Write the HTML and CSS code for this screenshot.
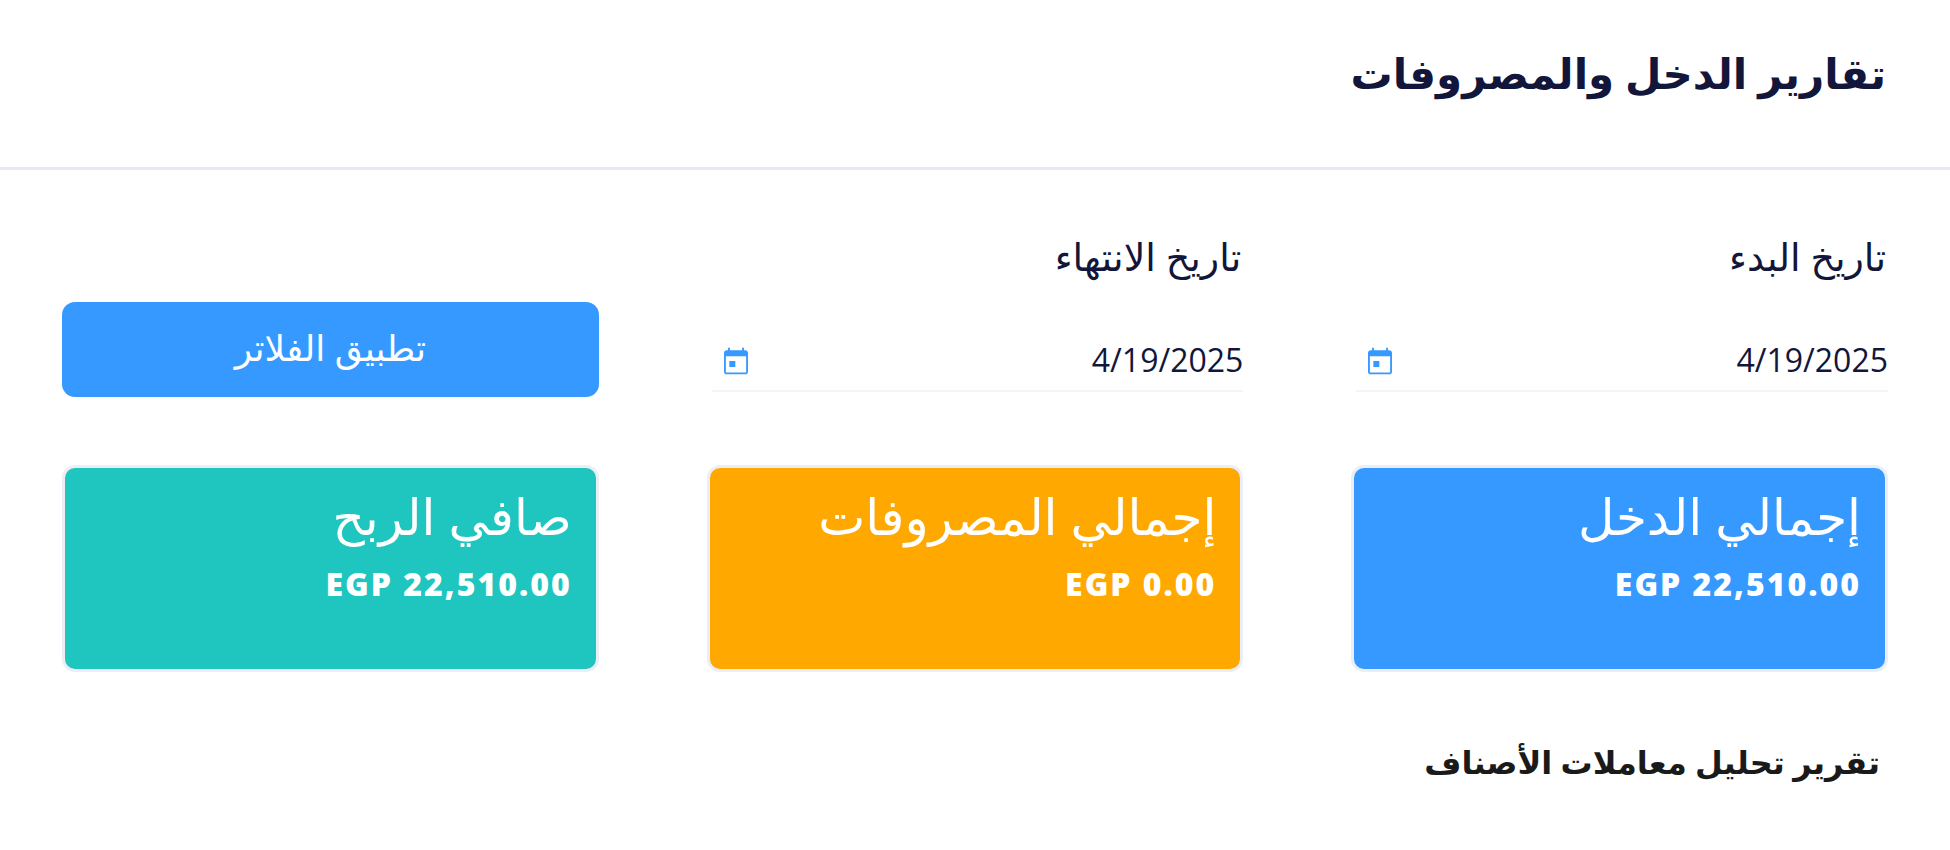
FILE: index.html
```html
<!DOCTYPE html>
<html lang="ar" dir="rtl">
<head>
  <meta charset="UTF-8">
  <meta name="viewport" content="width=device-width, initial-scale=1.0">
  <title>تقارير الدخل والمصروفات</title>
  <link rel="stylesheet" href="styles.css">
</head>
<body>
  <header class="page-header">
    <h1>تقارير الدخل والمصروفات</h1>
  </header>

  <main class="content">
    <form class="row filters">
      <div class="field">
        <label for="startDate">تاريخ البدء</label>
        <div class="date-box">
          <input type="text" id="startDate" value="4/19/2025">
          <button type="button" class="picker" aria-label="اختر تاريخ البدء">
            <svg viewBox="0 0 24 24"><path d="M19 4h-1V2h-1.400v2H7.400V2H6v2H5c-1.100 0-2 .9-2 2v14c0 1.100.9 2 2 2h14c1.100 0 2-.9 2-2V6c0-1.100-.9-2-2-2zm.6 16.600H4.400V8.500h15.200v12.100zM7 12h4.500v4.500H7z"/></svg>
          </button>
        </div>
      </div>
      <div class="field">
        <label for="endDate">تاريخ الانتهاء</label>
        <div class="date-box">
          <input type="text" id="endDate" value="4/19/2025">
          <button type="button" class="picker" aria-label="اختر تاريخ الانتهاء">
            <svg viewBox="0 0 24 24"><path d="M19 4h-1V2h-1.400v2H7.400V2H6v2H5c-1.100 0-2 .9-2 2v14c0 1.100.9 2 2 2h14c1.100 0 2-.9 2-2V6c0-1.100-.9-2-2-2zm.6 16.600H4.400V8.500h15.200v12.100zM7 12h4.500v4.500H7z"/></svg>
          </button>
        </div>
      </div>
      <button type="button" class="apply">تطبيق الفلاتر</button>
    </form>

    <section class="row cards">
      <div class="card income">
        <h2>إجمالي الدخل</h2>
        <p>EGP 22,510.00</p>
      </div>
      <div class="card expenses">
        <h2>إجمالي المصروفات</h2>
        <p>EGP 0.00</p>
      </div>
      <div class="card profit">
        <h2>صافي الربح</h2>
        <p>EGP 22,510.00</p>
      </div>
    </section>

    <h2 class="report-title">تقرير تحليل معاملات الأصناف</h2>
  </main>
</body>
</html>
```
FILE: styles.css
```css
* {
  box-sizing: border-box;
}

body {
  margin: 0;
  background: #fff;
  color: #12163a;
  font-family: "Open Sans", "DejaVu Sans", sans-serif;
  font-size: 32px;
}

h1, h2, p {
  margin: 0;
}

.page-header {
  padding: 43px 64px 64px;
  border-bottom: 3px solid #e6e8f4;
}

.page-header h1 {
  font-size: 42px;
  line-height: 60px;
  font-weight: 700;
}

.content {
  padding: 62px;
}

.row {
  display: grid;
  grid-template-columns: repeat(3, 1fr);
  gap: 108px;
}

.filters {
  align-items: end;
}

.field {
  display: flex;
  flex-direction: column;
  gap: 52px;
  padding-left: 5px;
  padding-bottom: 5px;
}

.field label {
  padding-right: 2px;
  font-size: 38px;
  line-height: 48px;
}

.date-box {
  display: flex;
  align-items: center;
  height: 60px;
  padding-left: 8px;
  border-bottom: 2px solid #f4f5fa;
}

.date-box input {
  flex: 1;
  min-width: 0;
  padding: 0 0 4px;
  border: 0;
  outline: 0;
  background: none;
  color: inherit;
  font: inherit;
}

.picker {
  width: 32px;
  height: 32px;
  padding: 0;
  border: 0;
  background: none;
}

.picker svg {
  display: block;
  fill: #3699ff;
}

.apply {
  height: 95px;
  padding: 0 16px 4px;
  border: 0;
  border-radius: 13px;
  background: #3699ff;
  color: #fff;
  font: inherit;
  font-size: 36px;
}

.cards {
  margin-top: 68px;
}

.card {
  min-height: 207px;
  padding: 16px 24px;
  border: 3px solid #eceef6;
  border-radius: 13px;
  color: #fff;
}

.card h2 {
  font-size: 50px;
  line-height: 64px;
  font-weight: 400;
}

.card p {
  margin-top: 12px;
  line-height: 48px;
  font-weight: 800;
  letter-spacing: 2px;
}

.income {
  background: #3699ff;
}

.expenses {
  background: #ffa800;
}

.profit {
  background: #1fc5bf;
}

.report-title {
  margin-top: 60px;
  padding-right: 8px;
  color: #1a1a1a;
  font-size: 32px;
  line-height: 60px;
  font-weight: 700;
}
```
